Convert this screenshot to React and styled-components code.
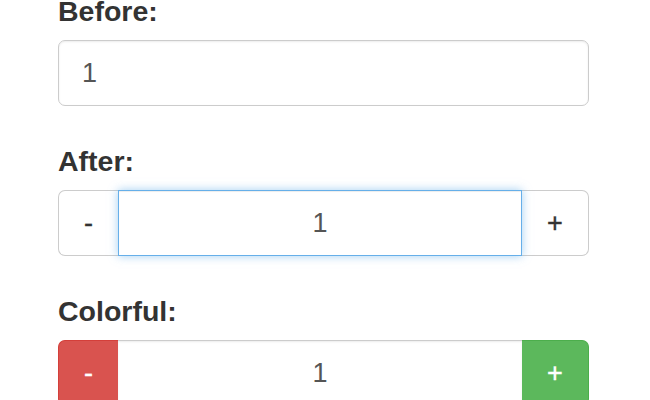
import React from 'react'
import styled, { createGlobalStyle } from 'styled-components'

const GlobalStyle = createGlobalStyle`
    * { box-sizing: border-box; }
    body {
        margin: 0;
        background: #fff;
        font-family: "Liberation Sans", Arial, sans-serif;
        color: #333;
    }
`

const variants = {
    default: { bg: '#fff', border: '#ccc', color: '#333' },
    danger: { bg: '#d9534f', border: '#d43f3a', color: '#fff' },
    success: { bg: '#5cb85c', border: '#4cae4c', color: '#fff' },
}

const Page = styled.div`
    padding: 0 0 0 58px;
    width: 589px;
`

const FormGroup = styled.div`
    margin-bottom: 42px;
`

const Label = styled.label`
    display: block;
    font-size: 28.5px;
    line-height: 27px;
    font-weight: 700;
    color: #333;
    margin: ${p => (p.first ? '-2px' : '0')} 0 15px 0;
`

const TextInput = styled.input`
    display: block;
    width: 100%;
    height: 66px;
    padding: 12px 23px;
    font-family: inherit;
    font-size: 27px;
    color: #555;
    background: #fff;
    border: 1px solid #ccc;
    border-radius: 7px;
    box-shadow: inset 0 1px 2px rgba(0, 0, 0, 0.075);
    outline: none;
`

const InputGroup = styled.div`
    display: flex;
    height: 66px;
`

const SpinButton = styled.button`
    flex: none;
    width: ${p => p.width}px;
    height: 100%;
    padding: 0;
    font-family: inherit;
    font-size: 27px;
    line-height: 1;
    -webkit-text-stroke: 0.4px currentColor;
    background: ${p => variants[p.variant].bg};
    color: ${p => variants[p.variant].color};
    border: 1px solid ${p => variants[p.variant].border};
    border-radius: ${p => (p.side === 'left' ? '7px 0 0 7px' : '0 7px 7px 0')};
    ${p => (p.side === 'left' ? 'border-right: none;' : 'border-left: none;')}
    cursor: pointer;
`

const CenterInput = styled.input`
    flex: 1;
    min-width: 0;
    height: 100%;
    padding: 12px 23px;
    font-family: inherit;
    font-size: 27px;
    color: #555;
    text-align: center;
    background: #fff;
    border: 1px solid ${p => (p.focused ? '#66afe9' : '#ccc')};
    ${p => (!p.focused ? 'border-left: none; border-right: none;' : '')}
    border-radius: 0;
    outline: none;
    position: relative;
    z-index: 1;
    box-shadow: ${p => (p.focused
        ? 'inset 0 1px 1px rgba(0,0,0,.075), 0 0 9px rgba(102, 175, 233, 0.6)'
        : 'inset 0 1px 2px rgba(0,0,0,.075)')};
`

function Spinner({ variant, focused }) {
    return (
        <InputGroup>
            <SpinButton side="left" width={60} variant={variant}>-</SpinButton>
            <CenterInput focused={focused} defaultValue="1" />
            <SpinButton side="right" width={67} variant={variant === 'danger' ? 'success' : variant}>+</SpinButton>
        </InputGroup>
    )
}

export default function App() {
    return (
        <>
            <GlobalStyle />
            <Page>
                <FormGroup>
                    <Label first>Before:</Label>
                    <TextInput defaultValue="1" />
                </FormGroup>
                <FormGroup>
                    <Label>After:</Label>
                    <Spinner variant="default" focused />
                </FormGroup>
                <FormGroup>
                    <Label>Colorful:</Label>
                    <Spinner variant="danger" />
                </FormGroup>
            </Page>
        </>
    )
}
